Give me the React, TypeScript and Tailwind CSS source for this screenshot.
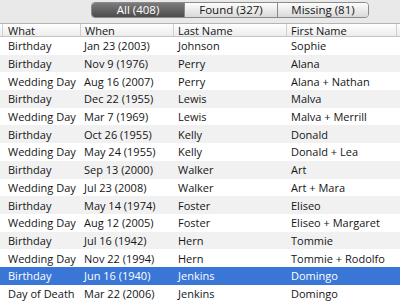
import React from "react";

const rows: [string, string, string, string][] = [
  ["Birthday", "Jan 23 (2003)", "Johnson", "Sophie"],
  ["Birthday", "Nov 9 (1976)", "Perry", "Alana"],
  ["Wedding Day", "Aug 16 (2007)", "Perry", "Alana + Nathan"],
  ["Birthday", "Dec 22 (1955)", "Lewis", "Malva"],
  ["Wedding Day", "Mar 7 (1969)", "Lewis", "Malva + Merrill"],
  ["Birthday", "Oct 26 (1955)", "Kelly", "Donald"],
  ["Wedding Day", "May 24 (1955)", "Kelly", "Donald + Lea"],
  ["Birthday", "Sep 13 (2000)", "Walker", "Art"],
  ["Wedding Day", "Jul 23 (2008)", "Walker", "Art + Mara"],
  ["Birthday", "May 14 (1974)", "Foster", "Eliseo"],
  ["Wedding Day", "Aug 12 (2005)", "Foster", "Eliseo + Margaret"],
  ["Birthday", "Jul 16 (1942)", "Hern", "Tommie"],
  ["Wedding Day", "Nov 22 (1994)", "Hern", "Tommie + Rodolfo"],
  ["Birthday", "Jun 16 (1940)", "Jenkins", "Domingo"],
  ["Day of Death", "Mar 22 (2006)", "Jenkins", "Domingo"],
];

export default function App() {
  return (
    <div
      className="w-[400px] h-[302px] overflow-hidden bg-white text-[11px] text-[#151515]"
      style={{ fontFamily: '"Open Sans", "Liberation Sans", sans-serif' }}
    >
      {/* toolbar */}
      <div className="h-[23px] bg-[#e9e9e9] flex items-start pt-[2px]">
        <div className="ml-[91px] flex h-[16px] w-[278px] rounded-[4px] border border-[#8a8a8a] overflow-hidden text-[11.5px]">
          <div className="w-[92px] flex items-center justify-center text-white bg-gradient-to-b from-[#7c7c7c] to-[#4c4c4c] leading-none">
            All (408)
          </div>
          <div className="w-[93px] flex items-center justify-center border-l border-[#8a8a8a] bg-gradient-to-b from-[#fdfdfd] to-[#d9d9d9] leading-none">
            Found (327)
          </div>
          <div className="flex-1 flex items-center justify-center border-l border-[#8a8a8a] bg-gradient-to-b from-[#fdfdfd] to-[#d9d9d9] leading-none">
            Missing (81)
          </div>
        </div>
      </div>
      {/* header */}
      <div className="h-[14px] flex border-t border-[#b4b4b4] border-b border-b-[#c4c4c4] bg-gradient-to-b from-[#ffffff] to-[#ececec] leading-none">
        <div className="w-[3px] border-r border-[#cfcfcf]" />
        <div className="w-[78px] pl-[5px] flex items-center border-r border-[#cfcfcf]">What</div>
        <div className="w-[93px] pl-[4px] flex items-center border-r border-[#cfcfcf]">When</div>
        <div className="w-[113px] pl-[4px] flex items-center border-r border-[#cfcfcf]">Last Name</div>
        <div className="w-[110px] pl-[4px] flex items-center border-r border-[#cfcfcf]">First Name</div>
        <div className="flex-1" />
      </div>
      {/* rows */}
      {rows.map((r, i) => {
        const selected = i === 13;
        const bg = selected ? "bg-[#3a76d6] text-white" : i % 2 === 1 ? "bg-[#f1f1f1]" : "bg-white";
        return (
          <div key={i} className={`h-[17.7px] flex items-center leading-none ${bg}`}>
            <div className="w-[3px]" />
            <div className="w-[78px] pl-[5px] whitespace-nowrap">{r[0]}</div>
            <div className="w-[93px] pl-[3px] whitespace-nowrap">{r[1]}</div>
            <div className="w-[113px] pl-[4px] whitespace-nowrap">{r[2]}</div>
            <div className="w-[110px] pl-[4px] whitespace-nowrap">{r[3]}</div>
          </div>
        );
      })}
    </div>
  );
}
